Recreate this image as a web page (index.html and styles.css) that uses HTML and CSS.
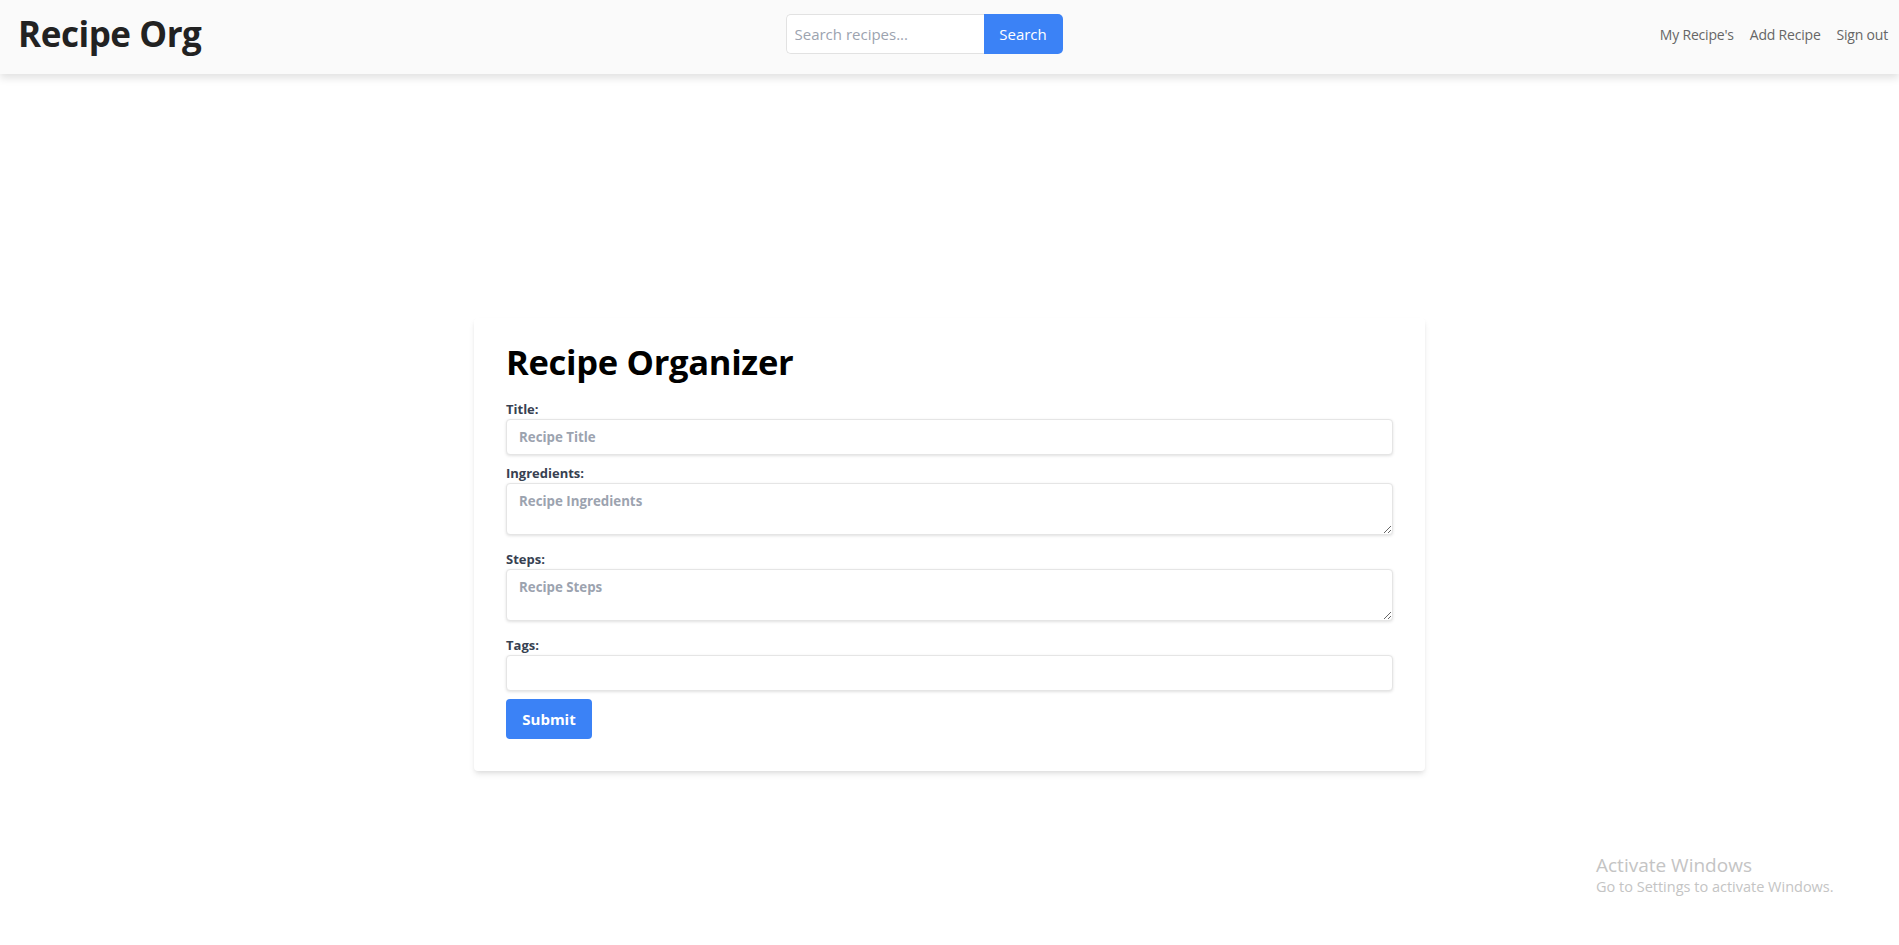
FILE: index.html
```html
<!DOCTYPE html>
<html lang="en">
<head>
<meta charset="utf-8">
<title>Recipe Org</title>
<link rel="stylesheet" href="styles.css">
</head>
<body>
<header class="topbar">
  <div class="brand">Recipe Org</div>
  <form class="search">
    <input class="search-input" type="text" placeholder="Search recipes...">
    <button class="search-btn" type="button">Search</button>
  </form>
  <nav class="nav">
    <a href="#">My Recipe's</a>
    <a href="#">Add Recipe</a>
    <a href="#">Sign out</a>
  </nav>
</header>
<main class="main">
  <form class="card">
    <h1 class="card-title">Recipe Organizer</h1>
    <label class="lbl">Title:</label>
    <input class="field" type="text" placeholder="Recipe Title">
    <label class="lbl">Ingredients:</label>
    <textarea class="field area" placeholder="Recipe Ingredients"></textarea>
    <label class="lbl">Steps:</label>
    <textarea class="field area" placeholder="Recipe Steps"></textarea>
    <label class="lbl">Tags:</label>
    <input class="field" type="text">
    <button class="submit" type="button">Submit</button>
  </form>
</main>
<div class="activate">
  <div class="act-1">Activate Windows</div>
  <div class="act-2">Go to Settings to activate Windows.</div>
</div>
</body>
</html>
```
FILE: styles.css
```css
* { box-sizing: border-box; }
html, body { margin: 0; padding: 0; }
body {
  font-family: "Open Sans", "Noto Sans", sans-serif;
  background: #ffffff;
  color: #1f2937;
  min-height: 945px;
}
.topbar {
  height: 74px;
  background: #fafafa;
  display: flex;
  align-items: center;
  justify-content: space-between;
  padding: 0 11px 7px 18px;
  box-shadow: 0 4px 8px rgba(0,0,0,0.12);
  position: relative;
}
.brand {
  font-size: 35px;
  font-weight: 700;
  color: #222;
  letter-spacing: -0.45px;
  width: 520px;
}
.search {
  display: flex;
  height: 40px;
}
.search-input {
  width: 198px;
  height: 40px;
  border: 1px solid #e2e2e2;
  border-right: none;
  border-radius: 5px 0 0 5px;
  padding: 0 8px;
  font-family: inherit;
  font-size: 15px;
  color: #333;
  background: #fff;
  outline: none;
}
.search-input::placeholder { color: #9ca3af; }
.search-btn {
  width: 79px;
  height: 40px;
  border: none;
  background: #3b82f6;
  color: #fff;
  font-family: inherit;
  font-size: 15px;
  border-radius: 0 5px 5px 0;
  padding: 0;
}
.nav {
  width: 578px;
  display: flex;
  justify-content: flex-end;
  gap: 16px;
  margin-top: 1px;
}
.nav a {
  color: #666;
  text-decoration: none;
  font-size: 14px;
  letter-spacing: -0.2px;
}
.main {
  display: flex;
  justify-content: center;
  padding-top: 244px;
}
.card {
  width: 951px;
  background: #fff;
  border-radius: 4px;
  box-shadow: 0 4px 6px -1px rgba(0,0,0,0.1), 0 2px 4px -1px rgba(0,0,0,0.06);
  padding: 24px 32px 32px;
  display: flex;
  flex-direction: column;
  align-items: flex-start;
}
.card-title {
  margin: 0 0 17px;
  font-size: 34.5px;
  line-height: 40px;
  font-weight: 700;
  color: #000;
  letter-spacing: -0.3px;
}
.lbl {
  display: block;
  font-size: 13px;
  line-height: 20px;
  font-weight: 700;
  color: #374151;
}
.field {
  display: block;
  width: 100%;
  height: 36px;
  border: 1px solid #e5e5e5;
  border-radius: 4px;
  box-shadow: 0 1px 3px rgba(0,0,0,0.12);
  padding: 0 12px;
  font-family: inherit;
  font-size: 13.3px;
  font-weight: 700;
  color: #374151;
  margin: 0 0 8px;
  background: #fff;
  outline: none;
}
.field::placeholder { color: #9ca3af; }
.area {
  height: 52px;
  padding: 8px 12px;
  resize: vertical;
  margin-bottom: 14px;
}
.submit {
  width: 86px;
  height: 40px;
  margin-top: 0;
  border: none;
  border-radius: 4px;
  background: #3b82f6;
  color: #fff;
  font-family: inherit;
  font-size: 15px;
  font-weight: 700;
  padding: 0;
}
.activate {
  position: absolute;
  left: 1596px;
  top: 852px;
  color: #c4c4c4;
}
.act-1 { font-size: 19px; line-height: 26px; }
.act-2 { font-size: 14.5px; line-height: 18px; }
```
